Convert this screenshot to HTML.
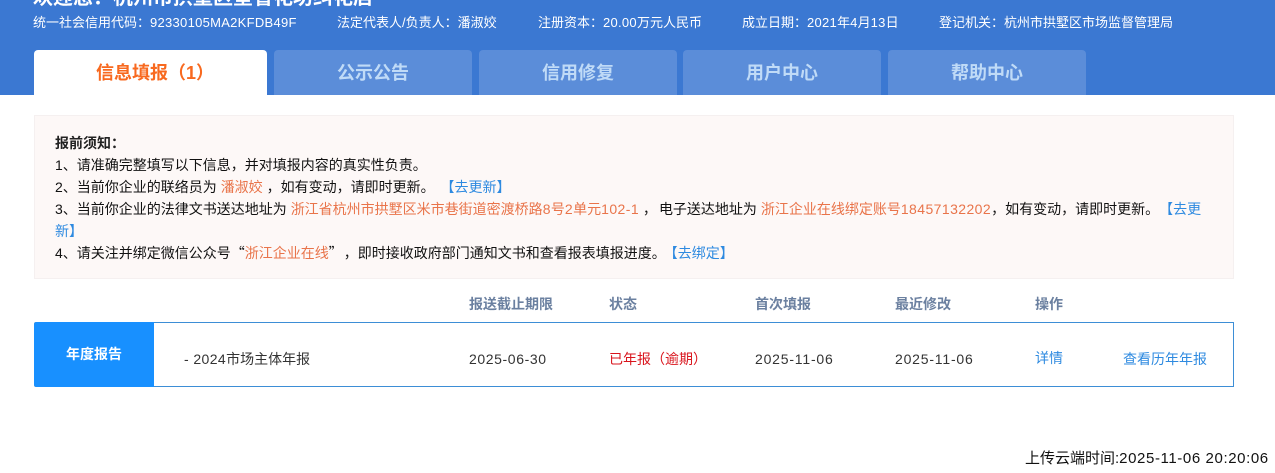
<!DOCTYPE html>
<html lang="zh-CN">
<head>
<meta charset="utf-8">
<title>信息填报</title>
<style>
html,body{margin:0;padding:0;width:1275px;height:473px;overflow:hidden;background:#fff}
body{position:relative;font-family:"Liberation Sans","Noto Sans CJK SC",sans-serif;font-size:13px;color:#222}
.a{position:absolute;white-space:nowrap;line-height:20px}
#hd{position:absolute;left:0;top:0;width:1275px;height:95px;background:#3b78d2}
#hd .w{color:#fff}
.l{letter-spacing:.28px}
.tab{position:absolute;top:50px;height:45px;line-height:46px;text-align:center;background:#5b8dd9;border-radius:4px 4px 0 0;color:#c0dbf7;font-size:18px;font-weight:700}
.tab.on{background:#fff;color:#f8691f;text-align:left;padding-left:62px;width:171px!important}
#notice{position:absolute;left:34px;top:115px;width:1174px;height:132px;padding:16px 4px 14px 20px;background:#fdf8f7;border:1px solid #f5f0f0;color:#111;line-height:22px;font-size:14px;white-space:nowrap}
#notice .l{letter-spacing:.42px}
.q{font-family:"Noto Sans CJK SC",sans-serif}
.o{color:#e9744a}
.b{color:#2e8ae0}
.th{color:#6b80a0;font-weight:700;font-size:14px}
#row{position:absolute;left:34px;top:322px;width:1198px;height:63px;border:1px solid #3d8ed6;border-radius:2px 0 0 2px}
#lab{position:absolute;left:34px;top:322px;width:120px;height:65px;background:#1890ff;border-radius:3px 0 0 3px;color:#fff;font-weight:700;font-size:14px;text-align:center;line-height:64px}
.c{color:#333;font-size:14px;letter-spacing:.6px}
</style>
</head>
<body>
<div id="hd">
  <div class="a w" style="left:33px;top:-15px;font-size:20px;font-weight:700;line-height:26px">欢迎您：杭州市拱墅区垦省花坊纠花店</div>
  <div class="a w" style="left:33px;top:13px">统一社会信用代码：<span class="l">92330105MA2KFDB49F</span></div>
  <div class="a w" style="left:337px;top:13px">法定代表人/负责人：潘淑姣</div>
  <div class="a w" style="left:538px;top:13px">注册资本：<span class="l">20.00</span>万元人民币</div>
  <div class="a w" style="left:742px;top:13px">成立日期：<span class="l">2021</span>年<span class="l">4</span>月<span class="l">13</span>日</div>
  <div class="a w" style="left:939px;top:13px">登记机关：杭州市拱墅区市场监督管理局</div>
  <div class="tab on" style="left:34px;width:233px">信息填报（1）</div>
  <div class="tab" style="left:274px;width:198px">公示公告</div>
  <div class="tab" style="left:479px;width:198px">信用修复</div>
  <div class="tab" style="left:683px;width:198px">用户中心</div>
  <div class="tab" style="left:888px;width:198px">帮助中心</div>
</div>

<div id="notice">
<div style="font-weight:700;color:#222">报前须知：</div>
<div>1、请准确完整填写以下信息，并对填报内容的真实性负责。</div>
<div>2、当前你企业的联络员为 <span class="o">潘淑姣</span> ，如有变动，请即时更新。 <span class="b" style="margin-left:2px">【去更新】</span></div>
<div>3、当前你企业的法律文书送达地址为 <span class="o">浙江省杭州市拱墅区米市巷街道密渡桥路<span class="l">8</span>号<span class="l">2</span>单元<span class="l">102-1</span></span> ，<span style="margin-left:2px">电子送达地址为</span> <span class="o">浙江企业在线绑定账号<span class="l">18457132202</span></span>，如有变动，请即时更新。<span class="b" style="margin-left:7px">【去更<br>新】</span></div>
<div>4、请关注并绑定微信公众号<span class="q">“</span><span class="o">浙江企业在线</span><span class="q">”</span><span style="margin-left:8px">，</span>即时接收政府部门通知文书和查看报表填报进度。<span class="b" style="margin-left:5px">【去绑定】</span></div>
</div>

<div class="a th" style="left:469px;top:294px">报送截止期限</div>
<div class="a th" style="left:609px;top:294px">状态</div>
<div class="a th" style="left:755px;top:294px">首次填报</div>
<div class="a th" style="left:895px;top:294px">最近修改</div>
<div class="a th" style="left:1035px;top:294px">操作</div>

<div id="row"></div>
<div id="lab">年度报告</div>
<div class="a" style="left:184px;top:349px;color:#333;font-size:14px"><span style="letter-spacing:.4px">- 2024</span>市场主体年报</div>
<div class="a c" style="left:469px;top:349px">2025-06-30</div>
<div class="a" style="left:609px;top:349px;color:#d9141c;font-size:14px">已年报（逾期）</div>
<div class="a c" style="left:755px;top:349px;letter-spacing:.8px">2025-11-06</div>
<div class="a c" style="left:895px;top:349px;letter-spacing:.8px">2025-11-06</div>
<div class="a b" style="left:1035px;top:348px;font-size:14px">详情</div>
<div class="a b" style="left:1123px;top:349px;font-size:14px">查看历年年报</div>

<div class="a" style="left:1025px;top:449px;color:#111;font-size:15px">上传云端时间:<span style="letter-spacing:.6px">2025-11-06 20:20:06</span></div>
</body>
</html>
